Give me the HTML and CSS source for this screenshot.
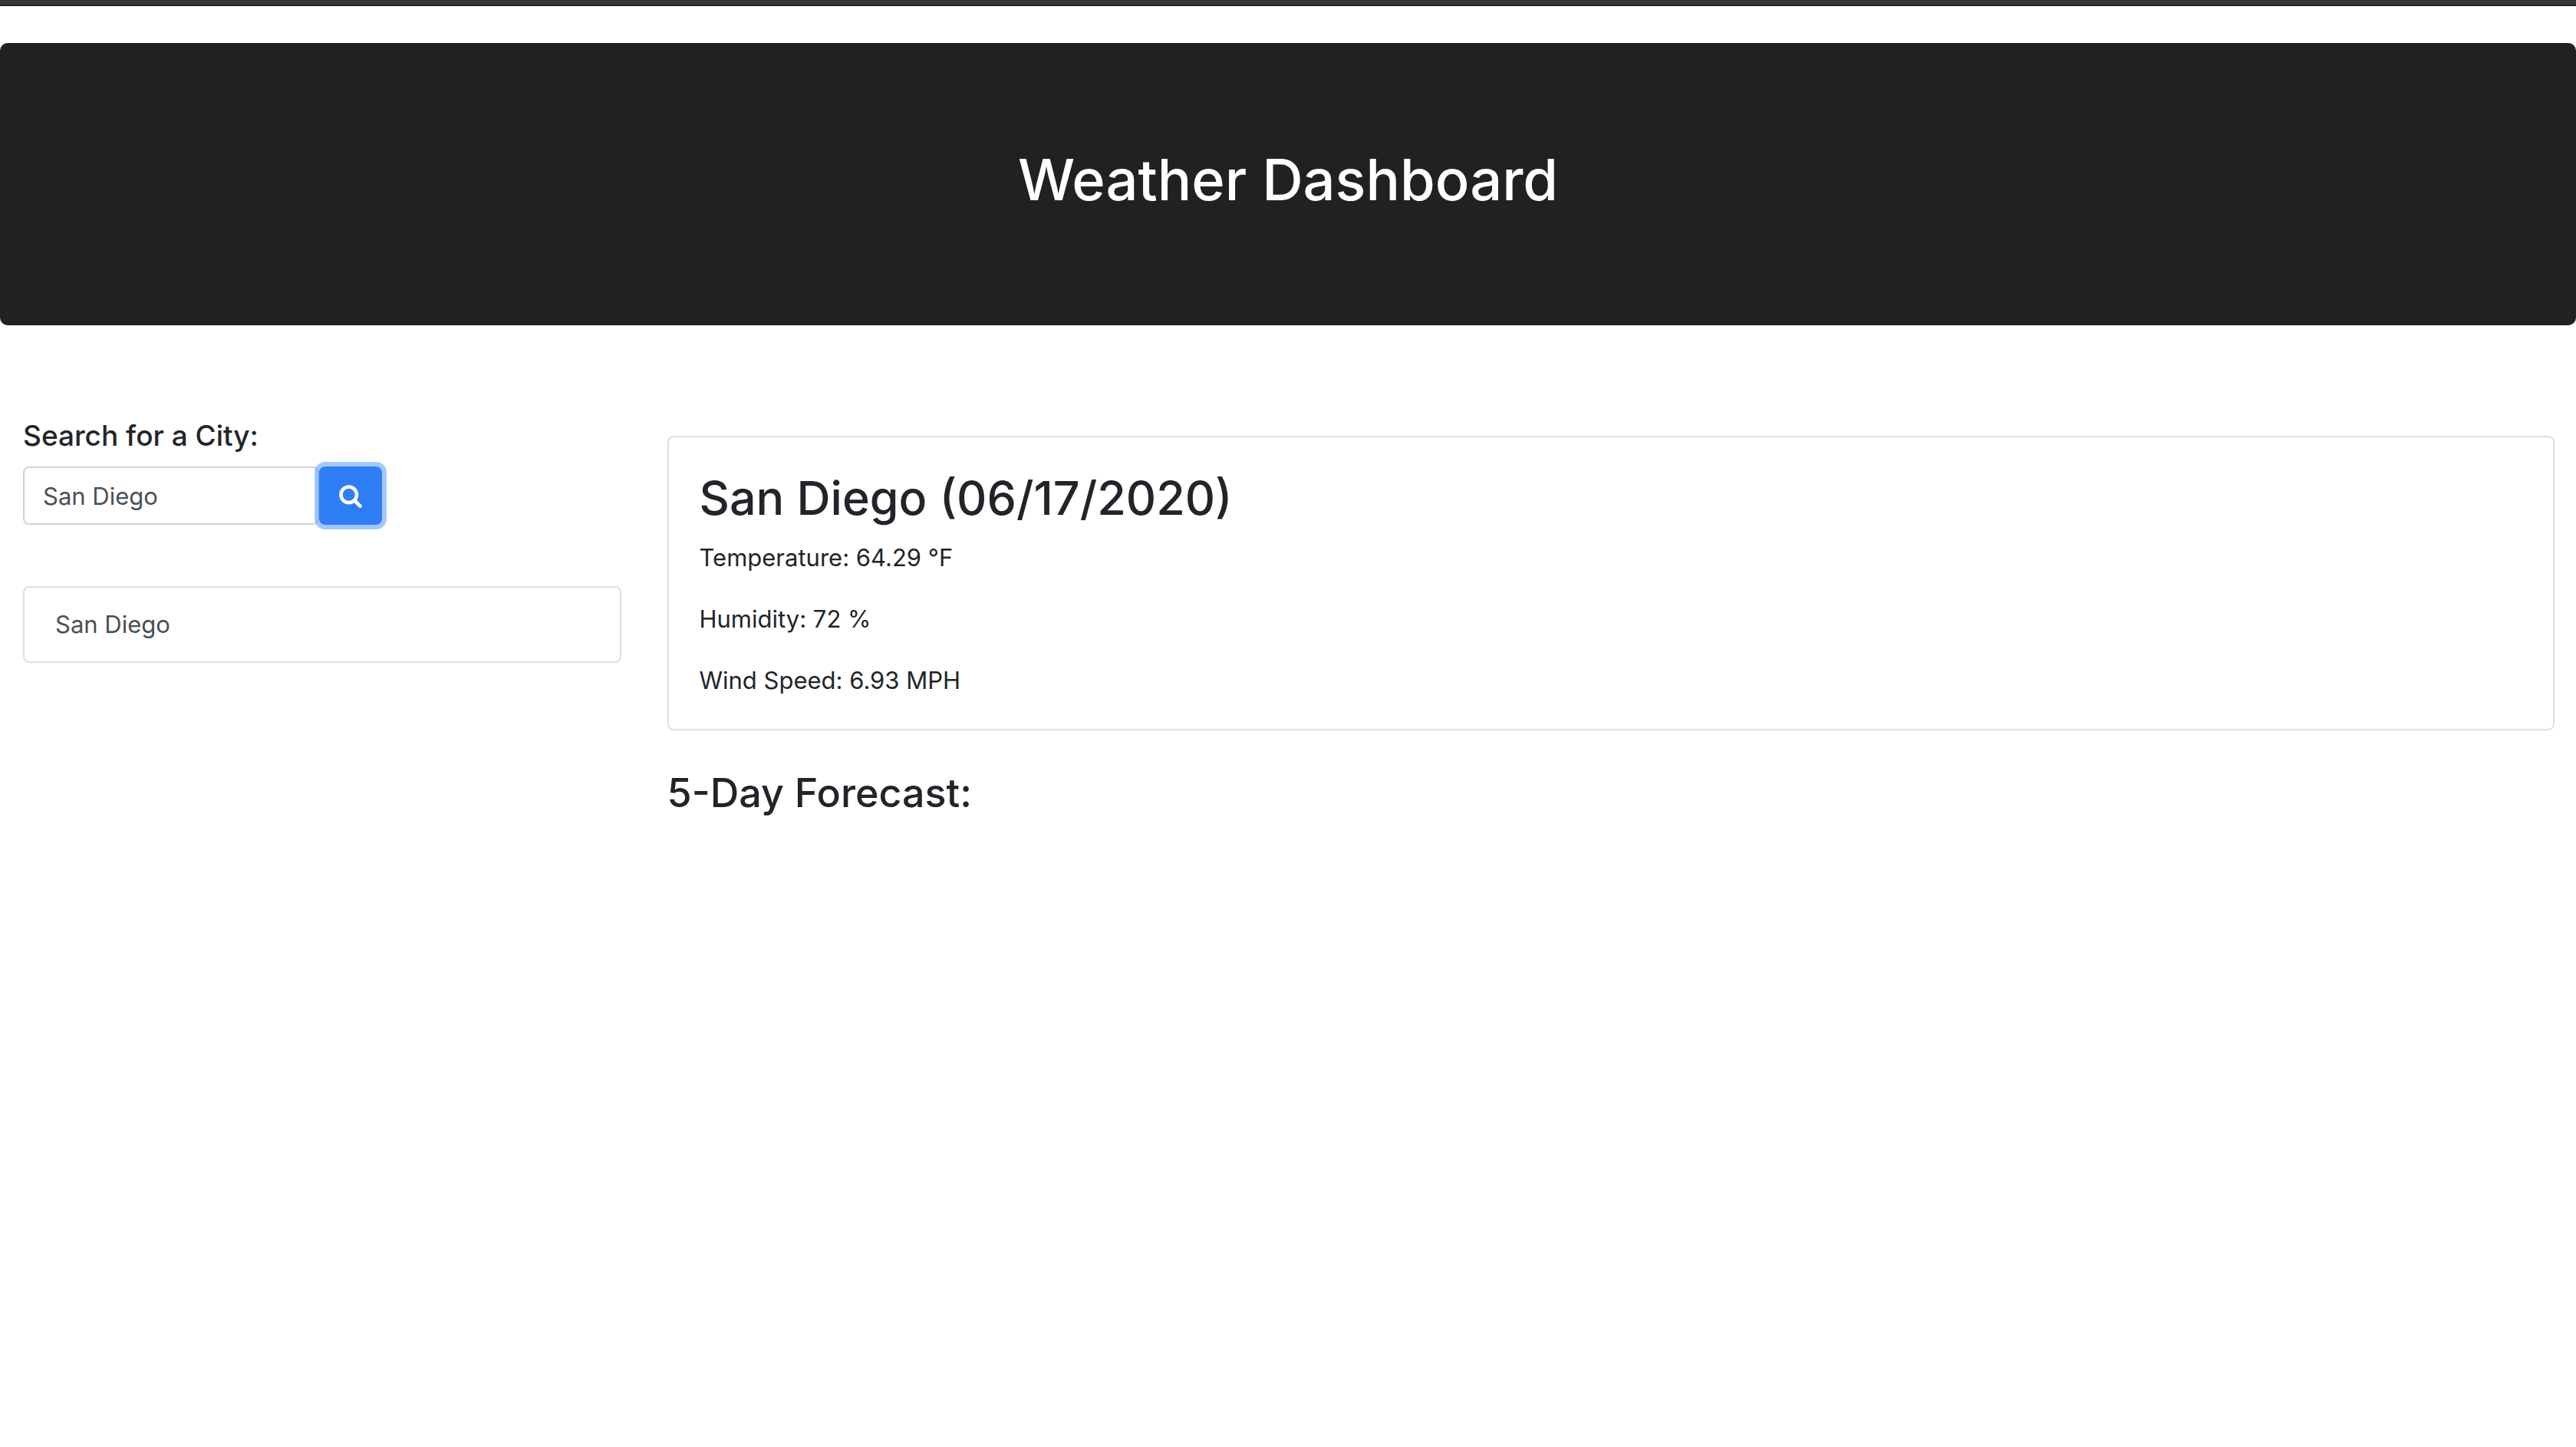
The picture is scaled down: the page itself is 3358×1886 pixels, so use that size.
FILE: index.html
```html
<!DOCTYPE html>
<html lang="en">
<head>
  <meta charset="utf-8">
  <meta name="viewport" content="width=device-width, initial-scale=1">
  <title>Weather Dashboard</title>
  <link rel="stylesheet" href="styles.css">
</head>
<body>
  <header class="banner">
    <h1 class="banner-title">Weather Dashboard</h1>
  </header>
  <main class="layout">
    <aside class="sidebar">
      <form class="search" onsubmit="return false">
        <label class="search-label" for="city">Search for a City:</label>
        <div class="search-group">
          <input class="search-input" id="city" type="text" value="San Diego">
          <button class="search-button" type="submit" aria-label="Search">
            <svg class="search-icon" viewBox="0 0 1664 1792" aria-hidden="true"><path fill="currentColor" d="M1152 832q0-185-131.5-316.5t-316.5-131.5-316.5 131.5-131.5 316.5 131.5 316.5 316.5 131.5 316.5-131.5 131.5-316.5zm512 832q0 52-38 90t-90 38q-54 0-90-38l-343-342q-179 124-399 124-143 0-273.5-55.5t-225-150-150-225-55.5-273.5 55.5-273.5 150-225 225-150 273.5-55.5 273.5 55.5 225 150 150 225 55.5 273.5q0 220-124 399l343 343q37 37 37 90z"/></svg>
          </button>
        </div>
      </form>
      <div class="history">
        <button class="history-item" type="button">San Diego</button>
      </div>
    </aside>
    <section class="content">
      <article class="card">
        <h2 class="card-title">San Diego (06/17/2020)</h2>
        <p class="card-text">Temperature: 64.29 °F</p>
        <p class="card-text">Humidity: 72 %</p>
        <p class="card-text">Wind Speed: 6.93 MPH</p>
      </article>
      <h3 class="forecast-title">5-Day Forecast:</h3>
    </section>
  </main>
</body>
</html>
```

FILE: styles.css
```css
* {
  box-sizing: border-box;
}

body {
  margin: 0;
  border-top: 6px solid #36363b;
  background: #fff;
  color: #212529;
  font: 400 31px/48px Inter, "Liberation Sans", sans-serif;
}

body::before {
  content: "";
  display: block;
  height: 2px;
  background: #242325;
}

h1,
h2,
h3,
p {
  margin: 0;
}

.banner {
  margin-top: 48px;
  padding: 130px 64px 142px;
  border-radius: 10px;
  background: #212121;
  color: #fff;
  text-align: center;
}

.banner-title {
  font-size: 74px;
  font-weight: 500;
  line-height: 96px;
}

.layout {
  display: grid;
  grid-template-columns: 1fr 3fr;
  padding-top: 120px;
}

.sidebar {
  padding: 0 30px;
}

.content {
  padding: 24px 28px 0 30px;
}

.search-label {
  display: block;
  margin-bottom: 16px;
  font-size: 37px;
  font-weight: 500;
}

.search-group {
  display: flex;
}

.search-input {
  width: 386px;
  height: 76px;
  padding: 0 24px;
  border: 2px solid #ced4da;
  border-radius: 8px;
  background: #fff;
  color: #495057;
  font: inherit;
}

.search-button {
  display: flex;
  align-items: center;
  justify-content: center;
  width: 82px;
  height: 76px;
  padding: 0;
  border: 0;
  border-radius: 8px;
  background: #2f7ef6;
  box-shadow: 0 0 0 6px rgba(72, 145, 247, 0.5);
  color: #fff;
}

.search-icon {
  width: 30px;
  height: 32px;
}

.history {
  margin-top: 80px;
}

.history-item {
  display: block;
  width: 100%;
  padding: 24px 40px;
  border: 2px solid #dfdfdf;
  border-radius: 8px;
  background: #fff;
  color: #495057;
  font: inherit;
  text-align: left;
}

.card {
  padding: 41px 40px 39px;
  border: 2px solid #dfdfdf;
  border-radius: 8px;
}

.card-title {
  margin-bottom: 16px;
  font-size: 61px;
  font-weight: 500;
  line-height: 76px;
}

.card-text + .card-text {
  margin-top: 32px;
}

.forecast-title {
  margin-top: 48px;
  font-size: 52px;
  font-weight: 500;
  line-height: 68px;
}
```
